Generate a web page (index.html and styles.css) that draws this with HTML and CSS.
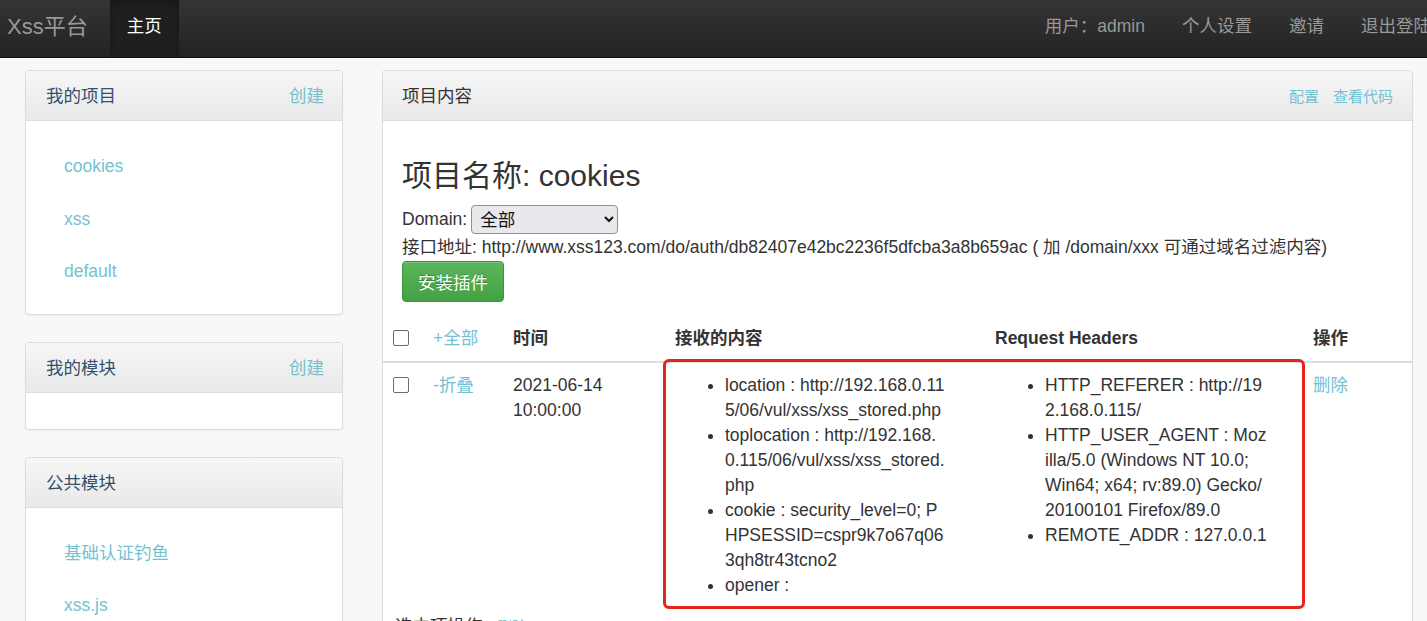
FILE: index.html
```html
<!DOCTYPE html>
<html lang="zh">
<head>
<meta charset="utf-8">
<title>Xss平台</title>
<link rel="stylesheet" href="styles.css">
</head>
<body>
<header class="navbar">
  <a class="brand">Xss平台</a>
  <ul class="nav">
    <li class="active"><a>主页</a></li>
  </ul>
  <ul class="nav nav-right">
    <li><a>用户：admin</a></li>
    <li><a>个人设置</a></li>
    <li><a>邀请</a></li>
    <li><a>退出登陆</a></li>
  </ul>
</header>

<div class="page">
  <aside class="sidebar">
    <section class="box">
      <div class="box-head"><span class="box-title">我的项目</span><a class="link">创建</a></div>
      <ul class="box-list">
        <li><a class="link">cookies</a></li>
        <li><a class="link">xss</a></li>
        <li><a class="link">default</a></li>
      </ul>
    </section>
    <section class="box">
      <div class="box-head"><span class="box-title">我的模块</span><a class="link">创建</a></div>
      <div class="box-empty"></div>
    </section>
    <section class="box">
      <div class="box-head"><span class="box-title">公共模块</span></div>
      <ul class="box-list">
        <li><a class="link">基础认证钓鱼</a></li>
        <li><a class="link">xss.js</a></li>
      </ul>
    </section>
  </aside>

  <main class="main box">
    <div class="box-head main-head">
      <span class="main-title">项目内容</span>
      <span class="head-links"><a class="link">配置</a><a class="link">查看代码</a></span>
    </div>
    <div class="main-body">
      <h3 class="project-name">项目名称: cookies</h3>
      <div class="domain-row">Domain: <select class="domain-select"><option>全部</option></select></div>
      <div class="api-line">接口地址: http://www.xss123.com/do/auth/db82407e42bc2236f5dfcba3a8b659ac ( 加 /domain/xxx 可通过域名过滤内容)</div>
      <button class="btn-success">安装插件</button>
    </div>
    <div class="table-wrap">
      <table class="table">
        <colgroup>
          <col class="c-chk"><col class="c-toggle"><col class="c-time"><col class="c-content"><col class="c-headers"><col class="c-op">
        </colgroup>
        <thead>
          <tr>
            <th><span class="chk"></span></th>
            <th class="normal"><a class="link">+全部</a></th>
            <th>时间</th>
            <th>接收的内容</th>
            <th>Request Headers</th>
            <th>操作</th>
          </tr>
        </thead>
        <tbody>
          <tr>
            <td><span class="chk"></span></td>
            <td><a class="link">-折叠</a></td>
            <td>2021-06-14<br>10:00:00</td>
            <td>
              <ul class="kv">
                <li>location : http://192.168.0.11<br>5/06/vul/xss/xss_stored.php</li>
                <li>toplocation : http://192.168.<br>0.115/06/vul/xss/xss_stored.<br>php</li>
                <li>cookie : security_level=0; P<br>HPSESSID=cspr9k7o67q06<br>3qh8tr43tcno2</li>
                <li>opener :</li>
              </ul>
            </td>
            <td>
              <ul class="kv">
                <li>HTTP_REFERER : http://19<br>2.168.0.115/</li>
                <li>HTTP_USER_AGENT : Moz<br>illa/5.0 (Windows NT 10.0;<br>Win64; x64; rv:89.0) Gecko/<br>20100101 Firefox/89.0</li>
                <li>REMOTE_ADDR : 127.0.0.1</li>
              </ul>
            </td>
            <td><a class="link">删除</a></td>
          </tr>
        </tbody>
      </table>
      <div class="highlight"></div>
      <div class="bulk">选中项操作 : <a class="link">删除</a></div>
    </div>
  </main>
</div>
</body>
</html>
```

FILE: styles.css
```css
* { box-sizing: border-box; }
html, body { margin: 0; padding: 0; }
body {
  background: #f8f8f8;
  font-family: "Liberation Sans", Arial, "Noto Sans CJK SC", sans-serif;
  font-size: 17.5px;
  line-height: 25px;
  color: #333;
  overflow: hidden;
  height: 621px;
}
a { text-decoration: none; cursor: pointer; }
.link { color: #74c1d3; }
ul { list-style: none; margin: 0; padding: 0; }

/* navbar */
.navbar {
  height: 58px;
  display: flex;
  align-items: stretch;
  background: linear-gradient(#343434, #232323);
  border-bottom: 1px solid #111;
}
.brand {
  color: #999;
  font-size: 22px;
  padding: 14px 22px 0 7px;
  line-height: 25px;
}
.nav { display: flex; }
.nav li a {
  display: block;
  height: 100%;
  padding: 14px 17px 0 17px;
  color: #999;
}
.nav li.active a {
  color: #fff;
  background: #1f1f1f;
  box-shadow: inset 0 3px 8px rgba(0,0,0,0.25);
}
.nav-right { margin-left: auto; margin-right: -22px; }
.nav-right li a { padding: 14px 18px 0 19px; }

/* page */
.page {
  display: flex;
  align-items: flex-start;
  gap: 39px;
  padding: 12px 0 0 25px;
}
.sidebar {
  width: 318px;
  flex: none;
  display: flex;
  flex-direction: column;
  gap: 27px;
}
.box {
  background: #fff;
  border: 1px solid #dcdcdc;
  border-radius: 4px;
  box-shadow: 0 1px 2px rgba(0,0,0,0.05);
}
.box-head {
  height: 50px;
  display: flex;
  align-items: center;
  justify-content: space-between;
  padding: 2px 18px 0 20px;
  background: linear-gradient(#f6f6f6, #e9e9e9);
  border-bottom: 1px solid #dcdcdc;
  border-radius: 4px 4px 0 0;
}
.box-title { color: #34506e; }
.box-list { padding: 19px 0 16px 38px; }
.box-list li { line-height: 52.5px; }
.box-empty { height: 36px; }

/* main */
.main {
  width: 1031px;
  flex: none;
  min-height: 700px;
}
.main-head { padding: 2px 19px 0 19px; }
.main-title { color: #333; }
.head-links { display: flex; gap: 14px; font-size: 15px; }
.main-body {
  padding: 35px 19px 0 19px;
  display: flex;
  flex-direction: column;
  align-items: flex-start;
}
.project-name {
  margin: 0;
  font-size: 30px;
  font-weight: normal;
  line-height: 40px;
  color: #333;
}
.domain-row {
  margin-top: 9px;
  height: 29px;
  display: flex;
  align-items: center;
  gap: 4px;
}
.domain-select {
  width: 147px;
  height: 29px;
  font-family: "Liberation Sans", "Noto Sans CJK SC", sans-serif;
  font-size: 17.5px;
  background: #e9e9ed;
  border: 1px solid #8f8f9d;
  border-radius: 4px;
  color: #111;
  padding: 0 4px;
}
.api-line { line-height: 27px; }
.btn-success {
  width: 102px;
  height: 41px;
  font-family: "Liberation Sans", "Noto Sans CJK SC", sans-serif;
  font-size: 17.5px;
  color: #fff;
  background: linear-gradient(#5bb75b, #43a043);
  border: 1px solid #3c923c;
  border-radius: 4px;
  box-shadow: inset 0 1px 0 rgba(255,255,255,0.2);
  text-shadow: 0 -1px 0 rgba(0,0,0,0.25);
}

/* table */
.table-wrap { position: relative; margin-top: 14px; }
.table { width: 100%; border-collapse: collapse; }
.c-chk { width: 40px; }
.c-toggle { width: 80px; }
.c-time { width: 162px; }
.c-content { width: 320px; }
.c-headers { width: 318px; }
.table th, .table td {
  text-align: left;
  vertical-align: top;
  padding: 10px 10px;
  white-space: nowrap;
}
.table th { font-weight: bold; color: #333; }
.table th.normal { font-weight: normal; }
.table thead tr { border-bottom: 2px solid #dddddd; }
.chk {
  display: inline-block;
  width: 16px;
  height: 16px;
  border: 1.5px solid #6d6d6d;
  border-radius: 2px;
  vertical-align: -2px;
  background: #fff;
}
.kv { padding-left: 50px; list-style: disc; }
.kv li { line-height: 25px; }
.highlight {
  position: absolute;
  left: 280px;
  top: 43px;
  width: 642px;
  height: 250px;
  border: 3px solid #e5231f;
  border-radius: 6px;
  pointer-events: none;
}
.bulk { padding: 6px 12px; }
.bulk .link { font-size: 15px; }
```
